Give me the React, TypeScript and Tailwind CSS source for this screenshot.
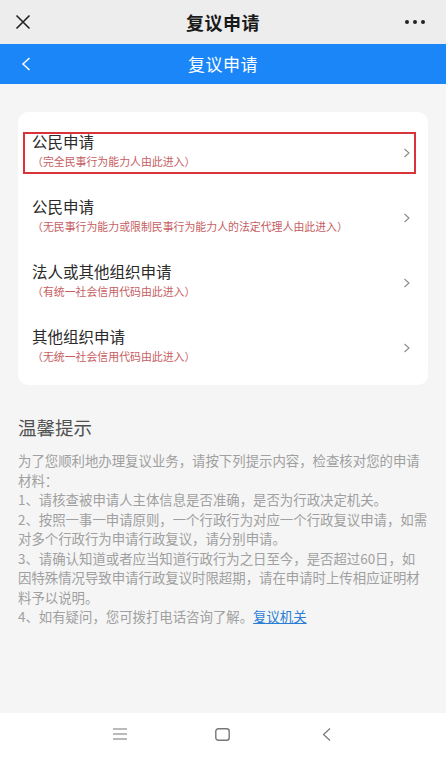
import React from "react";

const FONT = { fontFamily: '"Noto Sans CJK SC", "Noto Sans", sans-serif' };

function Chevron() {
  return (
    <svg width="8" height="10" viewBox="0 0 8 10" className="shrink-0">
      <path d="M1.5 1 L6 5 L1.5 9" fill="none" stroke="#8a8a8a" strokeWidth="1.1" />
    </svg>
  );
}

const items = [
  { t: "公民申请", s: "（完全民事行为能力人由此进入）", hl: true },
  { t: "公民申请", s: "（无民事行为能力或限制民事行为能力人的法定代理人由此进入）" },
  { t: "法人或其他组织申请", s: "（有统一社会信用代码由此进入）" },
  { t: "其他组织申请", s: "（无统一社会信用代码由此进入）" },
];

export default function App() {
  return (
    <div className="w-[446px] h-[757px] flex flex-col bg-[#f5f5f5] overflow-hidden" style={FONT}>
      {/* top bar */}
      <div className="h-[44px] shrink-0 bg-[#ededed] flex items-center justify-between px-[15px] relative">
        <svg width="16" height="16" viewBox="0 0 16 16">
          <path d="M1.5 1.5 L14.5 14.5 M14.5 1.5 L1.5 14.5" stroke="#222" strokeWidth="1.6" fill="none" />
        </svg>
        <div className="absolute left-0 right-0 text-center text-[18px] font-bold text-[#1a1a1a] tracking-[0.5px] pointer-events-none">
          复议申请
        </div>
        <div className="flex gap-[4px] mr-[6px]">
          <span className="w-[4px] h-[4px] rounded-full bg-[#222]" />
          <span className="w-[4px] h-[4px] rounded-full bg-[#222]" />
          <span className="w-[4px] h-[4px] rounded-full bg-[#222]" />
        </div>
      </div>
      {/* blue bar */}
      <div className="h-[40px] shrink-0 bg-[#1a86f8] flex items-center relative px-[21px]">
        <svg width="10" height="14" viewBox="0 0 10 14">
          <path d="M8.5 1 L2 7 L8.5 13" stroke="#fff" strokeWidth="1.5" fill="none" />
        </svg>
        <div className="absolute left-0 right-0 text-center text-[17px] text-white tracking-[0.5px] pointer-events-none">
          复议申请
        </div>
      </div>

      {/* content */}
      <div className="flex-1 px-[18px] pt-[28px]">
        <div className="bg-white rounded-[10px] pt-[8px] pb-[5px]">
          {items.map((it, i) => (
            <div key={i} className="h-[65px] flex items-center">
              <div
                className={
                  "ml-[5px] mr-[12px] flex-1 h-[42px] border-2 flex items-center pl-[7px] pr-[3px] " +
                  (it.hl ? "border-[#d8343a]" : "border-transparent")
                }
              >
                <div className="flex-1 flex flex-col">
                  <div className="text-[15.5px] leading-[19px] text-[#2a2a2a] mt-[-4px]">{it.t}</div>
                  <div className="text-[10.9px] leading-[15px] text-[#c65e62] mt-[3px]">{it.s}</div>
                </div>
                <Chevron />
              </div>
            </div>
          ))}
        </div>

        <div className="mt-[30px] text-[18.5px] leading-[24px] text-[#505050]">温馨提示</div>
        <div className="mt-[12px] text-[13.4px] leading-[19.5px] text-[#a0a0a0] whitespace-nowrap">
          <div>为了您顺利地办理复议业务，请按下列提示内容，检查核对您的申请</div>
          <div>材料：</div>
          <div>1、请核查被申请人主体信息是否准确，是否为行政决定机关。</div>
          <div>2、按照一事一申请原则，一个行政行为对应一个行政复议申请，如需</div>
          <div>对多个行政行为申请行政复议，请分别申请。</div>
          <div>3、请确认知道或者应当知道行政行为之日至今，是否超过60日，如</div>
          <div>因特殊情况导致申请行政复议时限超期，请在申请时上传相应证明材</div>
          <div>料予以说明。</div>
          <div>
            4、如有疑问，您可拨打电话咨询了解。
            <span className="text-[#2a7fd4] underline">复议机关</span>
          </div>
        </div>
      </div>

      {/* bottom nav */}
      <div className="h-[44px] shrink-0 bg-white flex items-center">
        <div className="w-full relative h-[14px]">
          <svg width="14" height="12" viewBox="0 0 14 12" className="absolute left-[113px] top-0">
            <path d="M0 1 H14 M0 6 H14 M0 11 H14" stroke="#777" strokeWidth="1.2" />
          </svg>
          <svg width="15" height="13" viewBox="0 0 15 13" className="absolute left-[215px] top-0">
            <rect x="0.8" y="0.8" width="13.4" height="11.4" rx="2.5" stroke="#777" strokeWidth="1.4" fill="none" />
          </svg>
          <svg width="9" height="13" viewBox="0 0 9 13" className="absolute left-[322px] top-0">
            <path d="M8 0.5 L1.5 6.5 L8 12.5" stroke="#777" strokeWidth="1.2" fill="none" />
          </svg>
        </div>
      </div>
    </div>
  );
}
